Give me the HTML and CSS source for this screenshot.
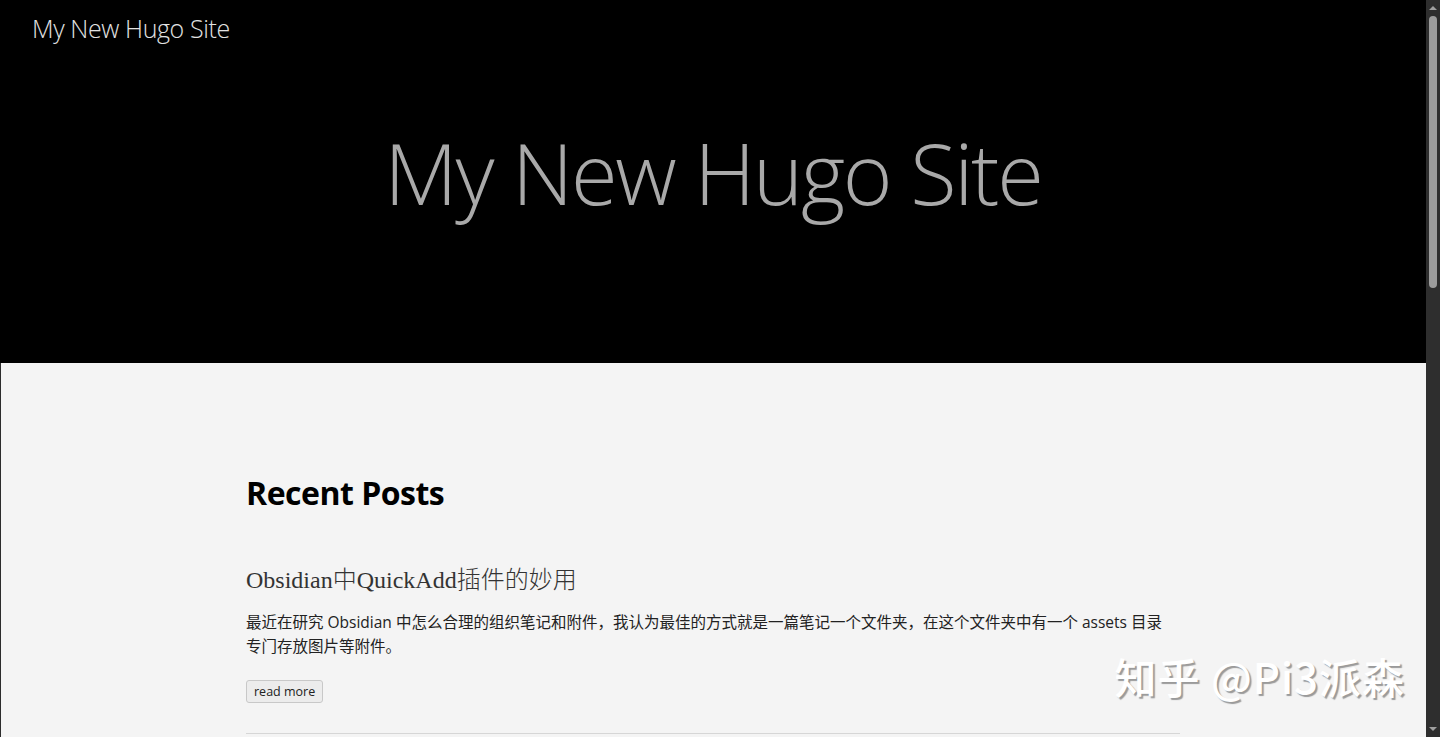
FILE: index.html
```html
<!DOCTYPE html>
<html lang="zh">
<head>
<meta charset="utf-8">
<title>My New Hugo Site</title>
<link rel="stylesheet" href="styles.css">
</head>
<body>
<div class="window">
  <div class="page">
    <header class="site-header">
      <div class="brand">My New Hugo Site</div>
      <h1 class="hero-title">My New Hugo Site</h1>
    </header>
    <main class="content">
      <div class="container">
        <h2 class="section-title">Recent Posts</h2>
        <article class="post">
          <h3 class="post-title">Obsidian<span class="cjk">中</span>QuickAdd<span class="cjk">插件的妙用</span></h3>
          <p class="post-summary">最近在研究 Obsidian 中怎么合理的组织笔记和附件，我认为最佳的方式就是一篇笔记一个文件夹，在这个文件夹中有一个 assets 目录专门存放图片等附件。</p>
          <a class="read-more" href="#">read more</a>
        </article>
        <hr class="divider">
      </div>
    </main>
    <div class="watermark">知乎 @Pi3派森</div>
  </div>
  <div class="scrollbar">
    <span class="arrow up"></span>
    <div class="track"><div class="thumb"></div></div>
    <span class="arrow down"></span>
  </div>
</div>
</body>
</html>
```

FILE: styles.css
```css
html, body {
  margin: 0;
  padding: 0;
  height: 100%;
  overflow: hidden;
}

body {
  font-family: "Open Sans", "Noto Sans CJK SC", sans-serif;
  background: #f4f4f4;
}

.window {
  display: flex;
  height: 100vh;
}

.page {
  flex: 1;
  position: relative;
  overflow: hidden;
  background: #f4f4f4;
  box-shadow: inset 1px 0 0 #2c2c2c;
}

.site-header {
  height: 363px;
  box-sizing: border-box;
  background: #000;
  padding: 12px 32px 0;
}

.brand {
  font-size: 25px;
  line-height: 32px;
  font-weight: 300;
  color: #e2e2e2;
  letter-spacing: -0.4px;
}

.hero-title {
  margin: 84px 0 0;
  text-align: center;
  font-size: 85px;
  line-height: 88px;
  font-weight: 300;
  color: #a9a9a9;
  letter-spacing: -2.3px;
}

.content {
  padding-top: 110px;
}

.container {
  width: 934px;
  margin: 0 auto;
}

.section-title {
  margin: 0;
  font-size: 32px;
  line-height: 40px;
  font-weight: 700;
  color: #000;
  letter-spacing: -0.5px;
}

.post {
  margin-top: 49px;
}

.post-title {
  margin: 0;
  font-family: "Liberation Serif", "Noto Sans CJK SC", serif;
  font-size: 24px;
  line-height: 32px;
  font-weight: 400;
  color: #333;
}

.post-title .cjk {
  font-family: "Noto Sans CJK SC", sans-serif;
  font-weight: 300;
  font-size: 24px;
}

.post-summary {
  margin: 14px 0 0;
  max-width: 926px;
  font-size: 15.5px;
  line-height: 24px;
  color: #222;
}

.read-more {
  display: inline-block;
  margin-top: 22px;
  padding: 0 7px;
  height: 21px;
  line-height: 21px;
  font-size: 12.5px;
  color: #222;
  text-decoration: none;
  background: #ececec;
  border: 1px solid #c8c8c8;
  border-radius: 3px;
}

.divider {
  margin: 30px 0 0;
  border: 0;
  border-top: 1px solid #d6d6d6;
}

.watermark {
  position: absolute;
  right: 21px;
  top: 647px;
  font-family: "Noto Sans CJK SC", sans-serif;
  font-size: 42px;
  line-height: 58px;
  font-weight: 500;
  color: #ffffff;
  text-shadow: 2px 2px 1px #9a9a9a;
  letter-spacing: 1px;
  white-space: nowrap;
}

.scrollbar {
  width: 14px;
  flex: none;
  background: #2e2e2e;
  display: flex;
  flex-direction: column;
  align-items: center;
}

.arrow {
  width: 0;
  height: 0;
  border-left: 4px solid transparent;
  border-right: 4px solid transparent;
  flex: none;
}

.arrow.up {
  margin-top: 6px;
  border-bottom: 4px solid #a0a0a0;
}

.arrow.down {
  margin-bottom: 6px;
  border-top: 4px solid #a0a0a0;
}

.track {
  flex: 1;
  width: 100%;
  display: flex;
  justify-content: center;
  padding-top: 6px;
}

.thumb {
  width: 8px;
  height: 272px;
  border-radius: 4px;
  background: #9c9c9c;
}
```
